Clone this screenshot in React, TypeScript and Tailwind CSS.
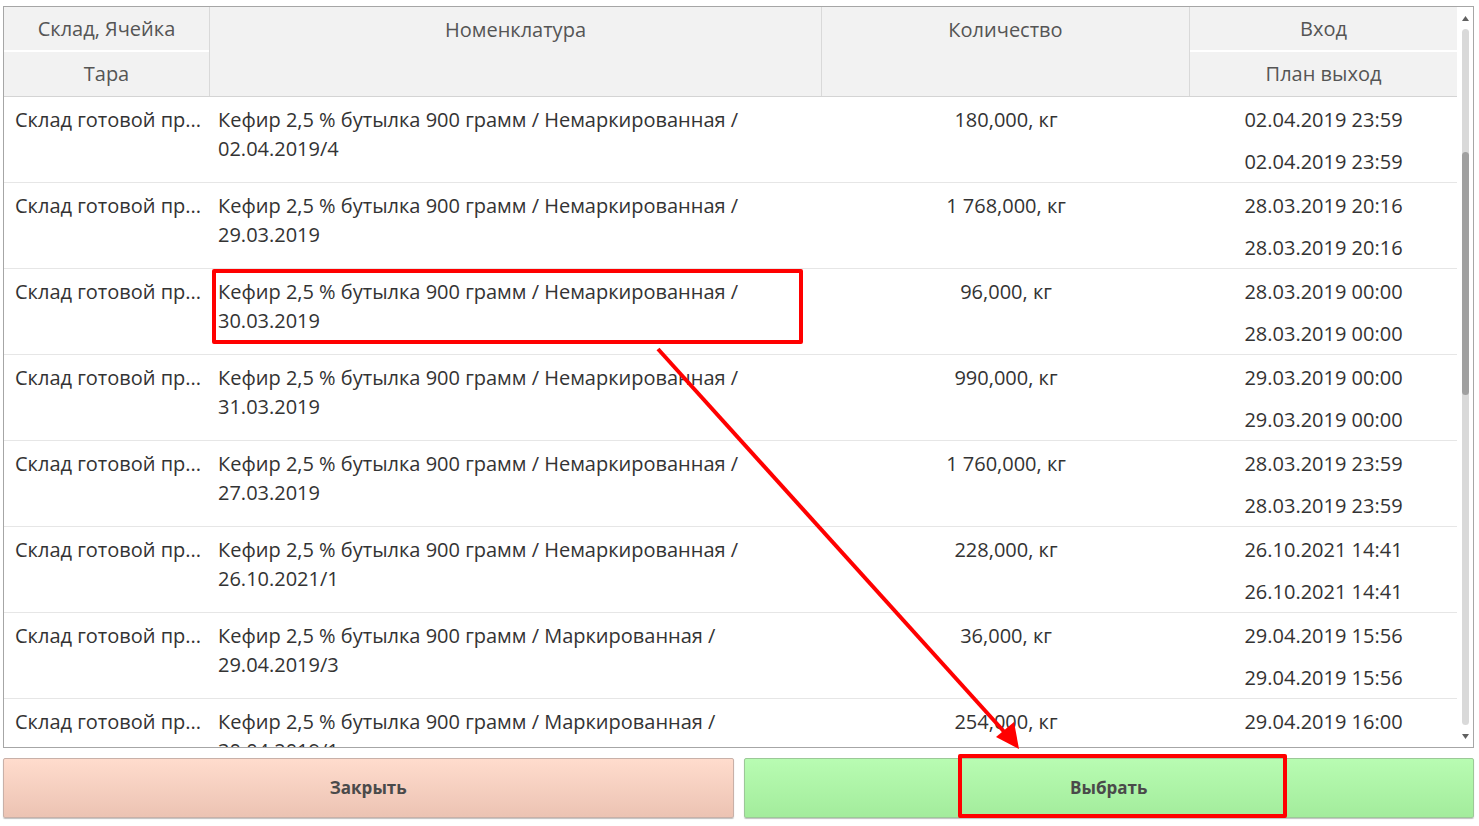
import React from "react";

const rows = [
  { nom: "Немаркированная /", sub: "02.04.2019/4", qty: "180,000, кг", d: "02.04.2019 23:59" },
  { nom: "Немаркированная /", sub: "29.03.2019", qty: "1 768,000, кг", d: "28.03.2019 20:16" },
  { nom: "Немаркированная /", sub: "30.03.2019", qty: "96,000, кг", d: "28.03.2019 00:00" },
  { nom: "Немаркированная /", sub: "31.03.2019", qty: "990,000, кг", d: "29.03.2019 00:00" },
  { nom: "Немаркированная /", sub: "27.03.2019", qty: "1 760,000, кг", d: "28.03.2019 23:59" },
  { nom: "Немаркированная /", sub: "26.10.2021/1", qty: "228,000, кг", d: "26.10.2021 14:41" },
  { nom: "Маркированная /", sub: "29.04.2019/3", qty: "36,000, кг", d: "29.04.2019 15:56" },
  { nom: "Маркированная /", sub: "30.04.2019/1", qty: "254,000, кг", d: "29.04.2019 16:00" },
];

const COLS = "grid grid-cols-[206px_612px_368px_267px]";

export default function App() {
  return (
    <div
      className="relative w-[1479px] h-[826px] bg-white text-[#333] overflow-hidden"
      style={{ fontFamily: '"Open Sans", "Noto Sans", sans-serif' }}
    >
      <div className="pt-[6px] px-[3px] flex flex-col">
        {/* Table */}
        <div className="w-[1471px] h-[742px] border border-[#a6a6a6] flex overflow-hidden">
          <div className="w-[1453px] flex flex-col">
            {/* header */}
            <div className={`${COLS} h-[90px] bg-[#f2f2f2] text-[#555] text-[20px] border-b border-[#d4d4d4]`}>
              <div className="flex flex-col border-r border-[#d9d9d9]">
                <div className="h-[45px] flex items-center justify-center border-b-2 border-white">Склад, Ячейка</div>
                <div className="flex-1 flex items-center justify-center">Тара</div>
              </div>
              <div className="flex justify-center pt-[8px] border-r border-[#d9d9d9]">Номенклатура</div>
              <div className="flex justify-center pt-[8px] border-r border-[#d9d9d9]">Количество</div>
              <div className="flex flex-col">
                <div className="h-[45px] flex items-center justify-center border-b-2 border-white">Вход</div>
                <div className="flex-1 flex items-center justify-center">План выход</div>
              </div>
            </div>
            {/* body */}
            <div className="flex-1 overflow-hidden text-[20px] leading-[29px]">
              {rows.map((r, i) => (
                <div key={i} className={`${COLS} h-[86px] border-b border-[#e6e6e6]`}>
                  <div className="pl-[11px] pt-[8px] whitespace-nowrap">Склад готовой пр...</div>
                  <div className="pl-[8px] pt-[8px]">
                    <div>Кефир 2,5 % бутылка 900 грамм / {r.nom}</div>
                    <div>{r.sub}</div>
                  </div>
                  <div className="pt-[8px] text-center">{r.qty}</div>
                  <div className="pt-[8px] text-center">
                    <div>{r.d}</div>
                    <div className="mt-[13px]">{r.d}</div>
                  </div>
                </div>
              ))}
            </div>
          </div>
          {/* scrollbar */}
          <div className="w-[16px] flex flex-col items-center bg-white">
            <div className="h-[22px] flex items-center justify-center">
              <svg width="7" height="5" viewBox="0 0 7 5"><path d="M0 5 L3.5 0 L7 5 Z" fill="#606060" /></svg>
            </div>
            <div className="flex-1 w-[7px] rounded-full bg-[#d9d9d9] flex flex-col">
              <div className="h-[123px]" />
              <div className="h-[243px] w-[7px] rounded-full bg-[#a0a0a0]" />
            </div>
            <div className="h-[22px] flex items-center justify-center">
              <svg width="7" height="5" viewBox="0 0 7 5"><path d="M0 0 L3.5 5 L7 0 Z" fill="#606060" /></svg>
            </div>
          </div>
        </div>
        {/* buttons */}
        <div className="mt-[10px] flex gap-[10px] w-[1471px]">
          <div className="flex-1 h-[60px] rounded-[2px] border border-[#c8b0a8] bg-gradient-to-b from-[#ffdccd] to-[#ecc3b3] flex items-center justify-center text-[17px] font-bold text-[#4a4a4a] shadow-[0_1px_1px_rgba(0,0,0,0.25)]">
            Закрыть
          </div>
          <div className="flex-1 h-[60px] rounded-[2px] border border-[#9cc898] bg-gradient-to-b from-[#b8fcb2] to-[#a3ec9c] flex items-center justify-center text-[17px] font-bold text-[#4a4a4a] shadow-[0_1px_1px_rgba(0,0,0,0.25)]">
            Выбрать
          </div>
        </div>
      </div>

      {/* annotations */}
      <div className="absolute left-[212px] top-[269px] w-[591px] h-[75px] border-[4px] border-[#ff0000] rounded-[2px]" />
      <div className="absolute left-[958px] top-[754px] w-[329px] h-[64px] border-[4px] border-[#ff0000] rounded-[2px]" />
      <svg className="absolute left-0 top-0 pointer-events-none" width="1479" height="826">
        <line x1="658" y1="349" x2="1008" y2="736" stroke="#ff0000" strokeWidth="4" />
        <path d="M1019 749 L996 737 L1014 722 Z" fill="#ff0000" />
      </svg>
    </div>
  );
}
